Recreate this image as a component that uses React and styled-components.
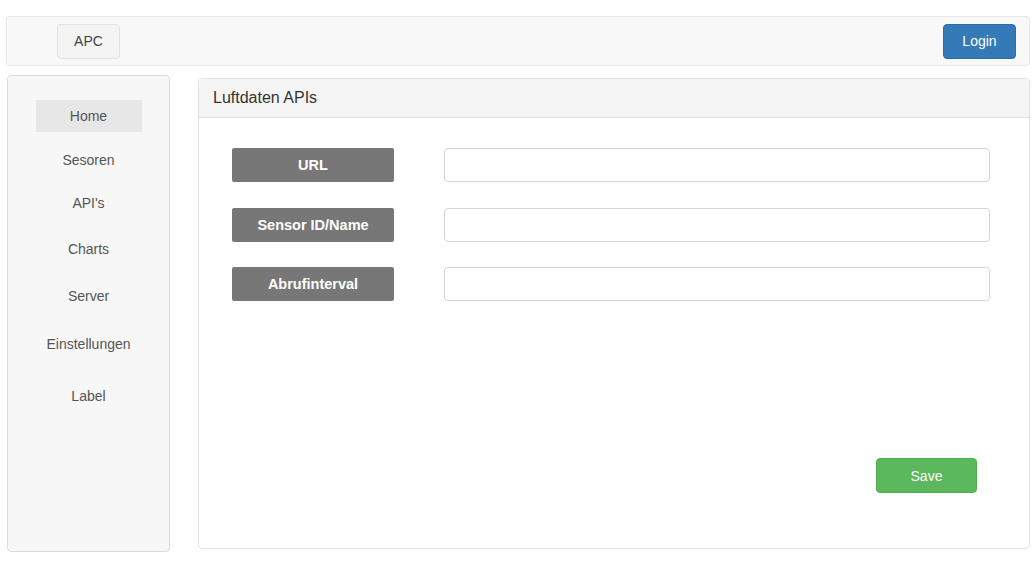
import styled, { createGlobalStyle } from "styled-components";

const GlobalStyle = createGlobalStyle`
  body {
    margin: 0;
    background: #fff;
    font-family: "Liberation Sans", Arial, sans-serif;
    color: #333;
  }
  * { box-sizing: border-box; }
`;

const Page = styled.div`
  padding: 16px 6px 0 6px;
`;

const Navbar = styled.header`
  height: 50px;
  display: flex;
  align-items: center;
  justify-content: space-between;
  padding: 0 13px 0 50px;
  background: #f8f8f8;
  border: 1px solid #e7e7e7;
  border-radius: 4px;
`;

const BrandButton = styled.button`
  width: 63px;
  height: 35px;
  font-family: inherit;
  font-size: 14px;
  color: #444;
  background: #f4f4f4;
  border: 1px solid #e2e2e2;
  border-radius: 4px;
`;

const LoginButton = styled.button`
  width: 73px;
  height: 35px;
  font-family: inherit;
  font-size: 14px;
  color: #fff;
  background: #337ab7;
  border: 1px solid #2e6da4;
  border-radius: 4px;
`;

const Body = styled.div`
  display: flex;
  gap: 28px;
  margin-top: 9px;
  align-items: flex-start;
`;

const Sidebar = styled.nav`
  width: 163px;
  height: 477px;
  margin-left: 1px;
  padding-top: 24px;
  background: #f7f7f7;
  border: 1px solid #dcdcdc;
  border-radius: 4px;
  display: flex;
  flex-direction: column;
  align-items: center;
`;

const NavItem = styled.div`
  width: 106px;
  height: 32px;
  margin-top: ${(p) => p.$offset || 0}px;
  display: flex;
  align-items: center;
  justify-content: center;
  font-size: 14px;
  color: #555;
  background: ${(p) => (p.$active ? "#e7e7e7" : "transparent")};
`;

const Panel = styled.section`
  flex: 1;
  height: 471px;
  margin-top: 3px;
  border: 1px solid #e3e3e3;
  border-radius: 4px;
  display: flex;
  flex-direction: column;
  overflow: hidden;
`;

const PanelHeader = styled.div`
  height: 39px;
  padding: 0 14px;
  display: flex;
  align-items: center;
  font-size: 16px;
  color: #333;
  background: #f5f5f5;
  border-bottom: 1px solid #e0e0e0;
`;

const PanelBody = styled.div`
  flex: 1;
  padding: 30px 39px 0 33px;
  display: flex;
  flex-direction: column;
  gap: 25.5px;
`;

const FormRow = styled.div`
  display: flex;
  align-items: center;
  gap: 50px;
  height: 34px;
`;

const FieldLabel = styled.div`
  width: 162px;
  height: 34px;
  display: flex;
  align-items: center;
  justify-content: center;
  font-size: 14.5px;
  font-weight: bold;
  color: #fff;
  background: #777;
  border-radius: 2px;
`;

const TextInput = styled.input`
  flex: 1;
  height: 34px;
  border: 1px solid #d4d4d4;
  border-radius: 4px;
  background: #fff;
`;

const Footer = styled.div`
  display: flex;
  justify-content: flex-end;
  padding: 0 52px 55px 0;
`;

const SaveButton = styled.button`
  width: 101px;
  height: 35px;
  font-family: inherit;
  font-size: 14px;
  color: #fff;
  background: #5cb85c;
  border: 1px solid #4cae4c;
  border-radius: 4px;
`;

const navItems = [
  { label: "Home", offset: 0, active: true },
  { label: "Sesoren", offset: 12 },
  { label: "API's", offset: 11 },
  { label: "Charts", offset: 14 },
  { label: "Server", offset: 15 },
  { label: "Einstellungen", offset: 16 },
  { label: "Label", offset: 20 },
];

const fields = ["URL", "Sensor ID/Name", "Abrufinterval"];

export default function App() {
  return (
    <Page>
      <GlobalStyle />
      <Navbar>
        <BrandButton>APC</BrandButton>
        <LoginButton>Login</LoginButton>
      </Navbar>
      <Body>
        <Sidebar>
          {navItems.map((item) => (
            <NavItem key={item.label} $active={item.active} $offset={item.offset}>
              {item.label}
            </NavItem>
          ))}
        </Sidebar>
        <Panel>
          <PanelHeader>Luftdaten APIs</PanelHeader>
          <PanelBody>
            {fields.map((f) => (
              <FormRow key={f}>
                <FieldLabel>{f}</FieldLabel>
                <TextInput type="text" />
              </FormRow>
            ))}
          </PanelBody>
          <Footer>
            <SaveButton>Save</SaveButton>
          </Footer>
        </Panel>
      </Body>
    </Page>
  );
}
